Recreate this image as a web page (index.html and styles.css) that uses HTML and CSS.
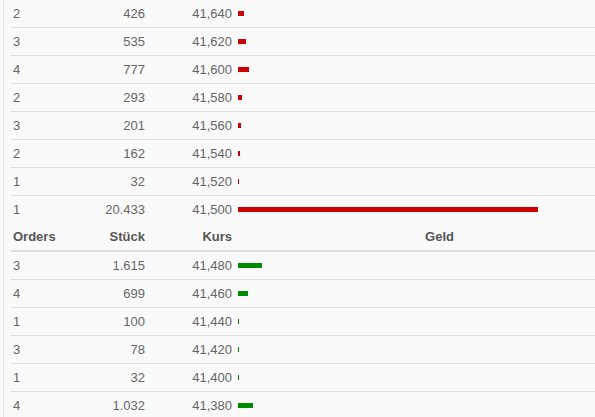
FILE: index.html
```html
<!DOCTYPE html>
<html lang="de">
 <head>
  <meta charset="UTF-8" />
  <title>Orderbuch</title>
  <link rel="stylesheet" href="styles.css">
 </head>
 <body>
  <div class="book">
   <table class="orders">
    <colgroup>
     <col class="c-orders">
     <col class="c-stueck">
     <col class="c-kurs">
     <col>
    </colgroup>
    <!-- Brief -->
    <tr><td>2</td><td class="num">426</td><td class="num">41,640</td><td class="geld"><span class="bar ask" style="width:6px"></span></td></tr>
    <tr><td>3</td><td class="num">535</td><td class="num">41,620</td><td class="geld"><span class="bar ask" style="width:8px"></span></td></tr>
    <tr><td>4</td><td class="num">777</td><td class="num">41,600</td><td class="geld"><span class="bar ask" style="width:11px"></span></td></tr>
    <tr><td>2</td><td class="num">293</td><td class="num">41,580</td><td class="geld"><span class="bar ask" style="width:4px"></span></td></tr>
    <tr><td>3</td><td class="num">201</td><td class="num">41,560</td><td class="geld"><span class="bar ask" style="width:3px"></span></td></tr>
    <tr><td>2</td><td class="num">162</td><td class="num">41,540</td><td class="geld"><span class="bar ask" style="width:2px"></span></td></tr>
    <tr><td>1</td><td class="num">32</td><td class="num">41,520</td><td class="geld"><span class="bar ask" style="width:1px"></span></td></tr>
    <tr><td>1</td><td class="num">20.433</td><td class="num">41,500</td><td class="geld"><span class="bar ask" style="width:300px"></span></td></tr>
    <tr class="head">
     <th>Orders</th>
     <th class="num">Stück</th>
     <th class="num">Kurs</th>
     <th class="geld-head">Geld</th>
    </tr>
    <!-- Geld -->
    <tr><td>3</td><td class="num">1.615</td><td class="num">41,480</td><td class="geld"><span class="bar bid" style="width:24px"></span></td></tr>
    <tr><td>4</td><td class="num">699</td><td class="num">41,460</td><td class="geld"><span class="bar bid" style="width:10px"></span></td></tr>
    <tr><td>1</td><td class="num">100</td><td class="num">41,440</td><td class="geld"><span class="bar bid" style="width:1px"></span></td></tr>
    <tr><td>3</td><td class="num">78</td><td class="num">41,420</td><td class="geld"><span class="bar bid" style="width:1px"></span></td></tr>
    <tr><td>1</td><td class="num">32</td><td class="num">41,400</td><td class="geld"><span class="bar bid" style="width:1px"></span></td></tr>
    <tr><td>4</td><td class="num">1.032</td><td class="num">41,380</td><td class="geld"><span class="bar bid" style="width:15px"></span></td></tr>
   </table>
  </div>
 </body>
</html>
```

FILE: styles.css
```css
body {
 margin: 0;
 background: #fafafa;
 font-family: "Liberation Sans", Arial, sans-serif;
 font-size: 13px;
 color: #666;
 overflow: hidden;
}
.book {
 margin-left: 3px;
 padding-left: 7px;
 border-left: 1px solid #e6e6e6;
}
.orders {
 width: 100%;
 border-collapse: collapse;
 table-layout: fixed;
}
.c-orders {
 width: 79px;
}
.c-stueck {
 width: 57px;
}
.c-kurs {
 width: 87px;
}
.orders td,
.orders th {
 height: 27px;
 padding: 0 2px;
 text-align: left;
 vertical-align: middle;
 border-top: 1px solid #dedede;
 white-space: nowrap;
}
.orders tr:first-child td {
 border-top: 0;
}
.orders th {
 font-weight: bold;
 color: #555;
 border-top: 0;
 border-bottom: 2px solid #dedede;
}
.orders .num {
 text-align: right;
}
.orders .geld {
 padding-left: 4px;
 line-height: 0;
}
.orders .geld-head {
 text-align: center;
 padding-left: 52px;
}
.bar {
 display: inline-block;
 height: 5px;
 vertical-align: middle;
}
.ask {
 background: #cc0000;
}
.bid {
 background: #008a00;
}
```
